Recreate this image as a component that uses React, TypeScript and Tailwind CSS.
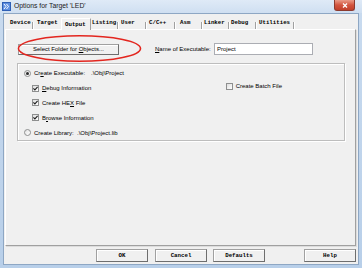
import React from 'react';

const sans = "font-['Liberation_Sans',Arial,sans-serif] text-[6px] leading-none text-black whitespace-nowrap";
const mono = "font-['Liberation_Mono','Courier_New',monospace] text-[5.75px] font-bold leading-none text-black whitespace-nowrap";

const tabs = [
  { label: 'Device', w: 25, pl: 3 },
  { label: 'Target', w: 27, pl: 3 },
  { label: 'Output', w: 30, pl: 3, active: true },
  { label: 'Listing', w: 26, pl: 1 },
  { label: 'User', w: 26, pl: 2 },
  { label: 'C/C++', w: 27, pl: 2 },
  { label: 'Asm', w: 25, pl: 4 },
  { label: 'Linker', w: 25, pl: 1 },
  { label: 'Debug', w: 25, pl: 1 },
  { label: 'Utilities', w: 36, pl: 2 },
];

function Sep() {
  return <div className="h-[7px] w-[2px] border-l border-l-[#a0a0a0] border-r border-r-white" />;
}

function Check({ on }: { on?: boolean }) {
  return (
    <div className="flex h-[7px] w-[7px] items-center justify-center border border-[#8e8f8f] bg-gradient-to-br from-[#dedede] to-white">
      {on && (
        <svg width="5" height="5" viewBox="0 0 5 5">
          <path d="M0.4 2.4 L1.9 3.9 L4.6 0.9" stroke="#1e1e1e" strokeWidth="1.1" fill="none" />
        </svg>
      )}
    </div>
  );
}

function Radio({ on }: { on?: boolean }) {
  return (
    <div className="flex h-[7px] w-[7px] items-center justify-center rounded-full border border-[#8e8f8f] bg-gradient-to-br from-[#e2e2e2] to-white">
      {on && <div className="h-[3px] w-[3px] rounded-full bg-[#2a2a2a]" />}
    </div>
  );
}

function Btn({ label, w }: { label: string; w: string }) {
  return (
    <div
      className={`${w} flex h-[13px] items-center justify-center border border-[#a0a0a0] border-r-[#6e6e6e] border-b-[#6e6e6e] bg-[#f0f0f0] shadow-[inset_1px_1px_0_#fff] ${mono}`}
    >
      {label}
    </div>
  );
}

export default function App() {
  return (
    <div className="relative flex h-[268px] w-[362px] flex-col overflow-hidden bg-gradient-to-b from-[#c9dbef] to-[#b8cfe9]">
      {/* title bar */}
      <div className="flex h-[13px] shrink-0 items-center bg-gradient-to-b from-[#dfeaf7] to-[#cfdff1] pl-[2px]">
        <svg width="9" height="9" viewBox="0 0 9 9" className="shrink-0">
          <rect x="0" y="0" width="9" height="9" fill="#2f5fb5" />
          <rect x="1" y="1" width="7" height="7" fill="#5d8ee0" />
          <path d="M2 2 L4 4.5 L2 7 M4.5 2 L6.5 4.5 L4.5 7" stroke="#fff" strokeWidth="1" fill="none" />
        </svg>
        <span className="ml-[3px] font-['Liberation_Sans',Arial,sans-serif] text-[6.8px] leading-none text-[#1a1a1a] whitespace-nowrap">
          Options for Target 'LED'
        </span>
        <div className="ml-auto mr-[7px] flex h-[11px] w-[21px] items-center justify-center self-start rounded-b-[3px] border border-t-0 border-[#8c3a2f] bg-gradient-to-b from-[#e99a88] via-[#d2543f] to-[#c13f2b]">
          <svg width="6" height="5" viewBox="0 0 6 5">
            <path d="M1 0.5 L5 4.5 M5 0.5 L1 4.5" stroke="#fff" strokeWidth="1.3" />
          </svg>
        </div>
      </div>

      {/* client area */}
      <div className="mx-[3px] flex h-[252px] flex-col border border-[#8ea7c4] bg-[#f0f0f0]">
        {/* tabs */}
        <div className="relative z-10 ml-[3px] mt-[3px] flex h-[12px] items-end">
          {tabs.map((t, i) =>
            t.active ? (
              <div
                key={t.label}
                style={{ width: t.w, paddingLeft: t.pl }}
                className={`mb-[-1px] flex h-[12px] items-center border-l border-t border-l-white border-t-white border-r border-r-[#a0a0a0] bg-[#f0f0f0] ${mono}`}
              >
                {t.label}
              </div>
            ) : (
              <React.Fragment key={t.label}>
                <div style={{ width: t.w, paddingLeft: t.pl }} className={`flex h-[11px] items-center pb-[1px] ${mono}`}>
                  {t.label}
                </div>
                {i !== 1 && <Sep />}
              </React.Fragment>
            )
          )}
        </div>

        {/* tab page */}
        <div className="ml-[1px] flex h-[217px] w-[351px] flex-col border border-l-white border-t-white border-r-[#a0a0a0] border-b-[#a0a0a0] shadow-[1px_1px_0_#dcdcdc]">
          <div className="mt-[13px] flex items-center">
            <div className={`ml-[12px] flex h-[11px] w-[101px] items-center justify-center border border-[#a0a0a0] border-r-[#6e6e6e] border-b-[#6e6e6e] shadow-[inset_1px_1px_0_#fff] ${sans}`}>
              Select Folder for&nbsp;<span className="underline">O</span>bjects...
            </div>
            <div className={`ml-[36px] w-[59px] ${sans}`}>
              <span className="underline">N</span>ame of Executable:
            </div>
            <div className={`flex h-[12px] w-[99px] items-center border border-[#abadb3] bg-white pl-[2px] ${sans}`}>Project</div>
          </div>

          {/* group box */}
          <div className="ml-[11px] mt-[8px] flex h-[78px] w-[328px] flex-col border border-[#bdbdbd] pt-[2px] shadow-[inset_1px_1px_0_#fff,1px_1px_0_#fff]">
            <div className="flex h-[15px] items-center pl-[6px]">
              <Radio on />
              <span className={`ml-[3px] w-[57px] ${sans}`}>
                Cr<span className="underline">e</span>ate Executable:
              </span>
              <span className={sans}>.\Obj\Project</span>
            </div>
            <div className="flex h-[15px] items-center pl-[14px]">
              <Check on />
              <span className={`ml-[3px] ${sans}`}>
                <span className="underline">D</span>ebug Information
              </span>
              <div className="ml-auto mr-[62px] flex -translate-y-[2px] items-center">
                <Check />
                <span className={`ml-[3px] ${sans}`}>Create Batch File</span>
              </div>
            </div>
            <div className="flex h-[15px] items-center pl-[14px]">
              <Check on />
              <span className={`ml-[3px] ${sans}`}>
                Create HE<span className="underline">X</span> File
              </span>
            </div>
            <div className="flex h-[15px] items-center pl-[14px]">
              <Check on />
              <span className={`ml-[3px] ${sans}`}>
                B<span className="underline">r</span>owse Information
              </span>
            </div>
            <div className="flex h-[15px] items-center pl-[6px]">
              <Radio />
              <span className={`ml-[3px] w-[43px] ${sans}`}>Create Library:</span>
              <span className={sans}>.\Obj\Project.lib</span>
            </div>
          </div>
        </div>

        {/* buttons */}
        <div className="mt-[3px] flex">
          <div className="ml-[92px]">
            <Btn label="OK" w="w-[52px]" />
          </div>
          <div className="ml-[7px]">
            <Btn label="Cancel" w="w-[52px]" />
          </div>
          <div className="ml-[6px]">
            <Btn label="Defaults" w="w-[52px]" />
          </div>
          <div className="ml-[39px]">
            <Btn label="Help" w="w-[52px]" />
          </div>
        </div>
      </div>

      {/* red annotation */}
      <svg className="pointer-events-none absolute left-0 top-0" width="362" height="268">
        <ellipse cx="79.5" cy="48.5" rx="61" ry="12.8" fill="none" stroke="#e3261f" strokeWidth="1.6" />
      </svg>
    </div>
  );
}
